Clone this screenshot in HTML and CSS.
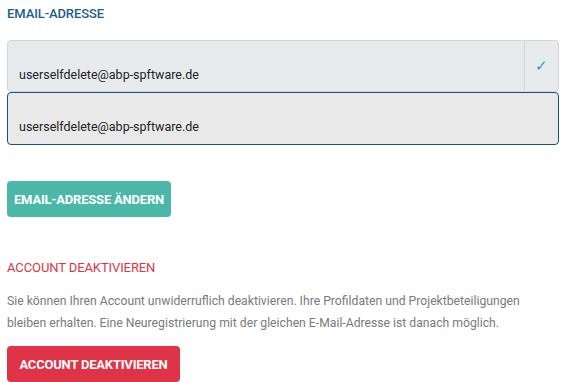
FILE: index.html
```html
<!DOCTYPE html>
<html lang="de">
  <head>
    <meta charset="UTF-8" />
    <meta name="viewport" content="width=device-width, initial-scale=1.0" />
    <title>Account</title>
    <link rel="stylesheet" href="styles.css">
  </head>
  <body>
    <div class="container">
      <h2 class="section-title">Email-Adresse</h2>
      <div class="input-group">
        <div class="field current">userselfdelete@abp-spftware.de</div>
        <span class="addon">&#10003;</span>
      </div>
      <div class="field new">userselfdelete@abp-spftware.de</div>

      <button type="button" class="btn btn-teal">Email-Adresse ändern</button>

      <h2 class="section-title danger">Account deaktivieren</h2>
      <p class="hint">
        Sie können Ihren Account unwiderruflich deaktivieren. Ihre Profildaten und Projektbeteiligungen<br>
        bleiben erhalten. Eine Neuregistrierung mit der gleichen E-Mail-Adresse ist danach möglich.
      </p>
      <button type="button" class="btn btn-red">Account deaktivieren</button>
    </div>
  </body>
</html>
```

FILE: styles.css
```css
* {
  margin: 0;
  padding: 0;
  box-sizing: border-box;
}

body {
  font-family: Roboto, "Liberation Sans", sans-serif;
  background: #fff;
  color: #212529;
}

.container {
  width: 552px;
  margin-left: 7px;
  padding-top: 5px;
}

.section-title {
  font-size: 13px;
  font-weight: 500;
  letter-spacing: -0.1px;
  text-transform: uppercase;
  color: #1b5e8c;
  line-height: 17px;
  margin-bottom: 18px;
}

.section-title.danger {
  color: #dc3545;
  font-weight: 400;
  margin-top: 42px;
  margin-bottom: 14px;
}

.input-group {
  display: flex;
}

.field {
  height: 52px;
  padding: 24px 11px 0;
  font-size: 12.5px;
  line-height: 20px;
  color: #222;
  background: #e8ebee;
  border: 1px solid #d2d6da;
  border-radius: 4px;
}

.field.current {
  flex: 1;
  height: 52px;
  border-radius: 4px 0 0 4px;
}

.addon {
  width: 34px;
  display: flex;
  align-items: center;
  justify-content: center;
  background: #e8ebee;
  border: 1px solid #d2d6da;
  border-left: none;
  border-radius: 0 4px 4px 0;
  color: #2aa89a;
  font-size: 15px;
}

.field.new {
  background: #e9e9e9;
  border-color: #1d4f7c;
  height: 53px;
}

.btn {
  display: block;
  border: none;
  border-radius: 4px;
  color: #fff;
  font-family: inherit;
  font-size: 13px;
  font-weight: 700;
  letter-spacing: -0.2px;
  text-transform: uppercase;
  white-space: nowrap;
  height: 36px;
  padding: 0 4px;
}

.btn-teal {
  background: #4bb8a7;
  margin-top: 36px;
  width: 164px;
}

.btn-red {
  background: #df3447;
  width: 173px;
}

.hint {
  font-size: 12.2px;
  line-height: 22px;
  color: #7a7a7a;
  white-space: nowrap;
  margin-bottom: 12px;
}
```
